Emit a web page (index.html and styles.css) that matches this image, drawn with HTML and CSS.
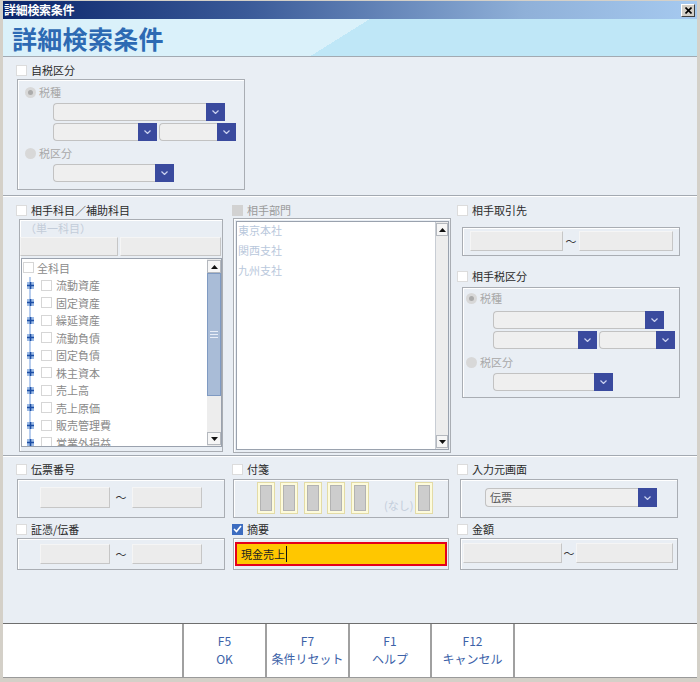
FILE: index.html
```html
<!DOCTYPE html>
<html lang="ja">
<head>
<meta charset="utf-8">
<title>詳細検索条件</title>
<link rel="stylesheet" href="styles.css">
</head>
<body>
<div class="window">
  <div class="titlebar">
    <span class="ttl">詳細検索条件</span>
    <span class="close"><svg width="7" height="7" viewBox="0 0 7 7"><path d="M0.5 0.5 6.5 6.5M6.5 0.5 0.5 6.5" stroke="#000" stroke-width="1.6"/></svg></span>
  </div>
  <div class="header"><h1>詳細検索条件</h1></div>

  <div class="sec sec1">
    <div class="lbl"><span class="chk"></span>自税区分</div>
    <div class="group taxgrp g-sec1">
      <div class="radio-row"><span class="radio on"></span>税種</div>
      <div class="combo cw1 m-c1"><span class="box"></span><span class="btn"><svg width="7" height="4" viewBox="0 0 7 4"><path d="M0.5 0.5 3.5 3.5 6.5 0.5" fill="none" stroke="#cdd3f0" stroke-width="1.2"/></svg></span></div>
      <div class="combo-row">
        <div class="combo cw2"><span class="box"></span><span class="btn"><svg width="7" height="4" viewBox="0 0 7 4"><path d="M0.5 0.5 3.5 3.5 6.5 0.5" fill="none" stroke="#cdd3f0" stroke-width="1.2"/></svg></span></div>
        <div class="combo cw3"><span class="box"></span><span class="btn"><svg width="7" height="4" viewBox="0 0 7 4"><path d="M0.5 0.5 3.5 3.5 6.5 0.5" fill="none" stroke="#cdd3f0" stroke-width="1.2"/></svg></span></div>
      </div>
      <div class="radio-row m-r2"><span class="radio"></span>税区分</div>
      <div class="combo cw4 m-c4"><span class="box"></span><span class="btn"><svg width="7" height="4" viewBox="0 0 7 4"><path d="M0.5 0.5 3.5 3.5 6.5 0.5" fill="none" stroke="#cdd3f0" stroke-width="1.2"/></svg></span></div>
    </div>
  </div>
  <div class="sep"></div>

  <div class="sec sec2">
    <div class="col">
      <div class="lbl"><span class="chk"></span>相手科目／補助科目</div>
      <div class="group acct">
        <div class="single">（単一科目）</div>
        <div class="btnrow"><span class="fbtn b1"></span><span class="fbtn b2"></span></div>
        <div class="list tree">
          <div class="list-body">
            <div class="trow root"><span class="chk sm"></span>全科目</div>
            <div class="children">
              <div class="trow"><span class="exp"><svg width="7" height="7" viewBox="0 0 7 7"><rect width="7" height="7" fill="#9dbbe6"/><path d="M3.5 0v7M0 3.5h7" stroke="#1d4fa6" stroke-width="1.6"/></svg></span><span class="chk sm"></span>流動資産</div>
              <div class="trow"><span class="exp"><svg width="7" height="7" viewBox="0 0 7 7"><rect width="7" height="7" fill="#9dbbe6"/><path d="M3.5 0v7M0 3.5h7" stroke="#1d4fa6" stroke-width="1.6"/></svg></span><span class="chk sm"></span>固定資産</div>
              <div class="trow"><span class="exp"><svg width="7" height="7" viewBox="0 0 7 7"><rect width="7" height="7" fill="#9dbbe6"/><path d="M3.5 0v7M0 3.5h7" stroke="#1d4fa6" stroke-width="1.6"/></svg></span><span class="chk sm"></span>繰延資産</div>
              <div class="trow"><span class="exp"><svg width="7" height="7" viewBox="0 0 7 7"><rect width="7" height="7" fill="#9dbbe6"/><path d="M3.5 0v7M0 3.5h7" stroke="#1d4fa6" stroke-width="1.6"/></svg></span><span class="chk sm"></span>流動負債</div>
              <div class="trow"><span class="exp"><svg width="7" height="7" viewBox="0 0 7 7"><rect width="7" height="7" fill="#9dbbe6"/><path d="M3.5 0v7M0 3.5h7" stroke="#1d4fa6" stroke-width="1.6"/></svg></span><span class="chk sm"></span>固定負債</div>
              <div class="trow"><span class="exp"><svg width="7" height="7" viewBox="0 0 7 7"><rect width="7" height="7" fill="#9dbbe6"/><path d="M3.5 0v7M0 3.5h7" stroke="#1d4fa6" stroke-width="1.6"/></svg></span><span class="chk sm"></span>株主資本</div>
              <div class="trow"><span class="exp"><svg width="7" height="7" viewBox="0 0 7 7"><rect width="7" height="7" fill="#9dbbe6"/><path d="M3.5 0v7M0 3.5h7" stroke="#1d4fa6" stroke-width="1.6"/></svg></span><span class="chk sm"></span>売上高</div>
              <div class="trow"><span class="exp"><svg width="7" height="7" viewBox="0 0 7 7"><rect width="7" height="7" fill="#9dbbe6"/><path d="M3.5 0v7M0 3.5h7" stroke="#1d4fa6" stroke-width="1.6"/></svg></span><span class="chk sm"></span>売上原価</div>
              <div class="trow"><span class="exp"><svg width="7" height="7" viewBox="0 0 7 7"><rect width="7" height="7" fill="#9dbbe6"/><path d="M3.5 0v7M0 3.5h7" stroke="#1d4fa6" stroke-width="1.6"/></svg></span><span class="chk sm"></span>販売管理費</div>
              <div class="trow"><span class="exp"><svg width="7" height="7" viewBox="0 0 7 7"><rect width="7" height="7" fill="#9dbbe6"/><path d="M3.5 0v7M0 3.5h7" stroke="#1d4fa6" stroke-width="1.6"/></svg></span><span class="chk sm"></span>営業外損益</div>
            </div>
          </div>
          <div class="vscroll">
            <span class="arr"><svg width="7" height="4" viewBox="0 0 7 4"><path d="M0 4 3.5 0 7 4z" fill="#111"/></svg></span>
            <span class="thumb"><i></i><i></i><i></i></span>
            <span class="track"></span>
            <span class="arr"><svg width="7" height="4" viewBox="0 0 7 4"><path d="M0 0 3.5 4 7 0z" fill="#111"/></svg></span>
          </div>
        </div>
      </div>
    </div>

    <div class="col">
      <div class="lbl dis"><span class="chk gray"></span>相手部門</div>
      <div class="group dept">
        <div class="list dlist">
          <div class="list-body items">
            <div class="item">東京本社</div>
            <div class="item">関西支社</div>
            <div class="item">九州支社</div>
          </div>
          <div class="vscroll vs2">
            <span class="arr"><svg width="7" height="4" viewBox="0 0 7 4"><path d="M0 4 3.5 0 7 4z" fill="#111"/></svg></span>
            <span class="track"></span>
            <span class="arr"><svg width="7" height="4" viewBox="0 0 7 4"><path d="M0 0 3.5 4 7 0z" fill="#111"/></svg></span>
          </div>
        </div>
      </div>
    </div>

    <div class="col">
      <div class="lbl"><span class="chk"></span>相手取引先</div>
      <div class="group range partner">
        <span class="fld w93"></span><span class="tilde t16">～</span><span class="fld w94"></span>
      </div>
      <div class="lbl m-l2"><span class="chk"></span>相手税区分</div>
      <div class="group taxgrp g-sec2">
        <div class="radio-row"><span class="radio on"></span>税種</div>
        <div class="combo cw1b m-c1b"><span class="box"></span><span class="btn"><svg width="7" height="4" viewBox="0 0 7 4"><path d="M0.5 0.5 3.5 3.5 6.5 0.5" fill="none" stroke="#cdd3f0" stroke-width="1.2"/></svg></span></div>
        <div class="combo-row">
          <div class="combo cw2"><span class="box"></span><span class="btn"><svg width="7" height="4" viewBox="0 0 7 4"><path d="M0.5 0.5 3.5 3.5 6.5 0.5" fill="none" stroke="#cdd3f0" stroke-width="1.2"/></svg></span></div>
          <div class="combo cw3b"><span class="box"></span><span class="btn"><svg width="7" height="4" viewBox="0 0 7 4"><path d="M0.5 0.5 3.5 3.5 6.5 0.5" fill="none" stroke="#cdd3f0" stroke-width="1.2"/></svg></span></div>
        </div>
        <div class="radio-row m-r2b"><span class="radio"></span>税区分</div>
        <div class="combo cw4b m-c4"><span class="box"></span><span class="btn"><svg width="7" height="4" viewBox="0 0 7 4"><path d="M0.5 0.5 3.5 3.5 6.5 0.5" fill="none" stroke="#cdd3f0" stroke-width="1.2"/></svg></span></div>
      </div>
    </div>
  </div>
  <div class="sep"></div>

  <div class="sec sec3">
    <div class="col">
      <div class="lbl"><span class="chk"></span>伝票番号</div>
      <div class="group r1 range left1">
        <span class="fld w70 h21"></span><span class="tilde t22">～</span><span class="fld w70 h21"></span>
      </div>
      <div class="lbl m-row2"><span class="chk"></span>証憑/伝番</div>
      <div class="group r2 range left2">
        <span class="fld w70"></span><span class="tilde t22">～</span><span class="fld w70"></span>
      </div>
    </div>

    <div class="col">
      <div class="lbl"><span class="chk"></span>付箋</div>
      <div class="group r1 tags">
        <span class="tag"><i></i></span>
        <span class="tag"><i></i></span>
        <span class="tag"><i></i></span>
        <span class="tag"><i></i></span>
        <span class="tag"><i></i></span>
        <span class="none">(なし)</span>
        <span class="tag"><i></i></span>
      </div>
      <div class="lbl m-row2"><span class="chk on"><svg width="9" height="8" viewBox="0 0 9 8"><path d="M1 4 3.5 6.5 8 1" fill="none" stroke="#fff" stroke-width="1.6"/></svg></span>摘要</div>
      <div class="group r2 memo">
        <div class="memo-field">現金売上<span class="caret"></span></div>
      </div>
    </div>

    <div class="col">
      <div class="lbl"><span class="chk"></span>入力元画面</div>
      <div class="group r1 src">
        <div class="combo cw5"><span class="box">伝票</span><span class="btn"><svg width="7" height="4" viewBox="0 0 7 4"><path d="M0.5 0.5 3.5 3.5 6.5 0.5" fill="none" stroke="#cdd3f0" stroke-width="1.2"/></svg></span></div>
      </div>
      <div class="lbl m-row2"><span class="chk"></span>金額</div>
      <div class="group r2 range amt">
        <span class="fld w99"></span><span class="tilde t14">～</span><span class="fld w97"></span>
      </div>
    </div>
  </div>

  <div class="footer">
    <div class="fspace"></div>
    <div class="fkey"><span>F5</span><span>OK</span></div>
    <div class="fkey"><span>F7</span><span>条件リセット</span></div>
    <div class="fkey w82"><span>F1</span><span>ヘルプ</span></div>
    <div class="fkey"><span>F12</span><span>キャンセル</span></div>
    <div class="fend"></div>
  </div>
</div>
</body>
</html>
```

FILE: styles.css
```css
* { box-sizing: border-box; }

body {
  margin: 0;
  width: 700px;
  height: 682px;
  overflow: hidden;
  background: #d4d0c8;
  font-family: "Noto Sans CJK JP", "Noto Sans", sans-serif;
  font-size: 11px;
  color: #222;
}

.window {
  width: 700px;
  height: 682px;
  display: flex;
  flex-direction: column;
  border-style: solid;
  border-color: #d4d0c8;
  border-width: 1px 3px 4px 3px;
  background: #e9eef4;
}

/* title bar */
.titlebar {
  height: 18px;
  flex: none;
  display: flex;
  align-items: center;
  justify-content: space-between;
  padding: 0 2px 0 1px;
  background: linear-gradient(to right, #0a246a 0%, #3a5a98 35%, #8fb0d8 75%, #a6caf0 100%);
}
.ttl {
  color: #fff;
  font-weight: bold;
  font-size: 12px;
  line-height: 18px;
  letter-spacing: -0.3px;
}
.close {
  width: 14px;
  height: 13px;
  display: flex;
  align-items: center;
  justify-content: center;
  background: #d4d0c8;
  border: 1px solid;
  border-color: #fff #404040 #404040 #fff;
}

/* header */
.header {
  height: 38px;
  flex: none;
  display: flex;
  align-items: center;
  padding-left: 9px;
  border-bottom: 1px solid #a2aab2;
  background: linear-gradient(148deg, #daf1fa 48.7%, #bfe7f7 48.7%);
}
.header h1 {
  margin: 0;
  font-size: 25px;
  font-weight: bold;
  line-height: 30px;
  color: #2d6ab3;
  letter-spacing: 0.3px;
}

/* sections */
.sec { flex: none; }
.sec1 { height: 138px; padding: 5px 0 0 13px; }
.sec2 { height: 258px; padding: 5px 0 0 13px; display: grid; grid-template-columns: 216px 225px 1fr; }
.sec3 { height: 166px; padding: 4px 0 0 13px; display: grid; grid-template-columns: 216px 225px 1fr; }
.sep {
  height: 2px;
  flex: none;
  border-top: 1px solid #a3a9b1;
  background: #fff;
}
.col { display: flex; flex-direction: column; align-items: flex-start; }

/* labels + checkboxes */
.lbl {
  height: 16px;
  display: flex;
  align-items: center;
  gap: 4px;
  font-size: 11px;
  color: #2a2a2a;
  white-space: nowrap;
}
.lbl.dis { color: #9a9a9a; }
.chk {
  width: 11px;
  height: 11px;
  flex: none;
  background: #fff;
  border: 1px solid #dcdcdc;
  display: inline-flex;
  align-items: center;
  justify-content: center;
}
.chk.gray { background: #d2d2d2; border-color: #d2d2d2; }
.chk.on { background: #3c6cc0; border-color: #3c6cc0; }
.chk.sm { border-color: #d6d6d6; }

/* groups */
.group {
  border: 1px solid #a9adb3;
  box-shadow: inset 1px 1px 0 #fff;
}

/* tax groups */
.taxgrp { display: flex; flex-direction: column; align-items: flex-start; height: 111px; }
.g-sec1 { margin: 1px 0 0 1px; width: 228px; padding: 5px 0 0 35px; }
.g-sec2 { margin: 3px 0 0 5px; width: 218px; padding: 3px 0 0 30px; }
.radio-row {
  height: 14px;
  display: flex;
  align-items: center;
  gap: 3px;
  color: #a8a8a8;
  margin-left: -28px;
}
.g-sec2 .radio-row { margin-left: -27px; }
.radio {
  width: 11px;
  height: 11px;
  border-radius: 50%;
  background: #d8d8d8;
  display: inline-flex;
  align-items: center;
  justify-content: center;
}
.radio.on::after {
  content: "";
  width: 5px;
  height: 5px;
  border-radius: 50%;
  background: #ababab;
}
.m-c1 { margin-top: 4px; }
.m-c1b { margin-top: 6px; }
.m-r2 { margin-top: 5px; }
.m-r2b { margin-top: 6px; }
.m-c4 { margin-top: 4px; }
.combo-row { display: flex; gap: 2px; margin-top: 2px; }

.combo { display: flex; height: 18px; flex: none; }
.combo .box {
  flex: 1;
  background: #efefef;
  border: 1px solid #c2c2c2;
  border-right: none;
  border-radius: 4px 0 0 4px;
  color: #5a5a5a;
  font-size: 11px;
  line-height: 17px;
  padding-left: 4px;
}
.combo .btn {
  width: 19px;
  flex: none;
  background: #3a4a9e;
  display: flex;
  align-items: center;
  justify-content: center;
}
.cw1 { width: 172px; }
.cw2 { width: 104px; }
.cw3 { width: 77px; }
.cw4 { width: 121px; }
.cw1b { width: 171px; }
.cw3b { width: 76px; }
.cw4b { width: 120px; }
.cw5 { width: 172px; height: 19px; }

/* account tree */
.acct {
  margin: 1px 0 0 3px;
  width: 204px;
  height: 233px;
  display: flex;
  flex-direction: column;
  align-items: flex-start;
}
.single {
  height: 17px;
  line-height: 17px;
  padding-left: 5px;
  color: #c3ccd9;
  font-size: 11px;
}
.btnrow { display: flex; gap: 2px; }
.fbtn, .fld {
  display: block;
  background: #ececec;
  border: 1px solid;
  border-color: #f5f5f5 #c6c6c6 #c6c6c6 #f5f5f5;
}
.fbtn { height: 19px; }
.b1 { width: 98px; }
.b2 { width: 101px; }

.list {
  display: flex;
  background: #fff;
  border: 1px solid #9aa2ae;
  overflow: hidden;
}
.tree { margin: 2px 0 0 1px; width: 201px; height: 189px; }
.list-body { flex: 1; overflow: hidden; }
.trow {
  height: 17.5px;
  display: flex;
  align-items: center;
  color: #8a8a8a;
  font-size: 11px;
  white-space: nowrap;
}
.trow.root { padding-left: 1px; gap: 3px; }
.children {
  background: linear-gradient(#b7cdee, #b7cdee) no-repeat 7px 0 / 2px 100%;
}
.children .trow { padding-left: 5px; }
.exp { width: 7px; height: 7px; display: flex; margin-right: 7px; }
.children .chk { margin-right: 4px; }

.vscroll {
  width: 14px;
  flex: none;
  display: flex;
  flex-direction: column;
  padding: 1px 0;
  margin-right: 0;
  background: #ececec;
}
.arr {
  height: 13px;
  flex: none;
  display: flex;
  align-items: center;
  justify-content: center;
  background: #f6f6f6;
  border: 1px solid #b4b8be;
}
.thumb {
  height: 123px;
  flex: none;
  background: #a9bcd7;
  border: 1px solid #7f9ac2;
  display: flex;
  flex-direction: column;
  align-items: center;
  justify-content: center;
  gap: 2px;
}
.thumb i { display: block; width: 8px; height: 1px; background: #e8eef8; }
.track { flex: 1; background: #ededed; }

/* dept list */
.dept {
  width: 218px;
  height: 235px;
  margin-left: 1px;
  padding: 2px 0 0 2px;
}
.dlist { width: 213px; height: 229px; }
.items { padding-left: 1px; }
.item {
  height: 20px;
  line-height: 20px;
  color: #b9c8dc;
  font-size: 11px;
}
.items .item:first-child { margin-top: -2px; }
.vs2 { width: 13px; border-left: 1px solid #c8cdd4; }

/* partner range */
.range { display: flex; align-items: flex-start; }
.partner { margin: 9px 0 0 5px; width: 218px; height: 29px; padding: 3px 0 0 7px; }
.m-l2 { margin-top: 12px; }
.fld { height: 20px; }
.h21 { height: 21px; }
.w93 { width: 93px; }
.w94 { width: 94px; }
.w70 { width: 70px; }
.w99 { width: 99px; }
.w97 { width: 97px; }
.tilde {
  display: block;
  text-align: center;
  font-size: 11px;
  line-height: 20px;
  color: #333;
}
.t16 { width: 16px; }
.t22 { width: 22px; }
.t14 { width: 14px; }

/* section 3 */
.r1 { margin-top: 2px; height: 39px; }
.r2 { margin-top: 1px; height: 32px; }
.m-row2 { margin-top: 3px; }
.left1 { margin-left: 1px; width: 208px; padding: 7px 0 0 22px; }
.left2 { margin-left: 1px; width: 208px; padding: 5px 0 0 22px; }

.tags {
  margin-left: 1px;
  width: 216px;
  display: flex;
  align-items: flex-start;
  padding: 2px 0 0 23px;
}
.tag {
  width: 18px;
  height: 32px;
  flex: none;
  margin-right: 5.4px;
  border: 1px solid #e3dba6;
  background: #fdfbdc;
  padding: 2px;
  display: block;
}
.tag i {
  display: block;
  height: 100%;
  background: #cdcdcd;
  border: 1px solid #b3b3b3;
}
.none {
  width: 41px;
  padding: 15px 0 0 10px;
  color: #c3cddb;
  font-size: 11px;
  white-space: nowrap;
}

.memo { margin-left: 1px; width: 216px; padding: 3px 0 0 1px; }
.memo-field {
  width: 212px;
  height: 24px;
  border: 2px solid #e4001b;
  background: #ffc700;
  display: flex;
  align-items: center;
  padding-left: 4px;
  font-size: 11px;
  color: #222;
}
.caret { width: 1px; height: 16px; background: #111; margin-left: 1px; }

.src { margin-left: 3px; width: 218px; padding: 8px 0 0 24px; }
.amt { margin-left: 3px; width: 218px; padding: 4px 0 0 2px; }

/* footer */
.footer {
  height: 55px;
  flex: none;
  display: flex;
  background: #fff;
  border-top: 1px solid #6e6e6e;
  border-bottom: 1px solid #9a9a9a;
}
.fspace { width: 179px; }
.fkey {
  width: 83px;
  border-left: 2px solid #a0a0a0;
  display: flex;
  flex-direction: column;
  align-items: center;
  justify-content: center;
  color: #3c62a8;
  font-size: 12px;
  line-height: 18px;
  padding-bottom: 2px;
}
.fkey.w82 { width: 82px; }
.fend { flex: 1; border-left: 2px solid #a0a0a0; }
```
